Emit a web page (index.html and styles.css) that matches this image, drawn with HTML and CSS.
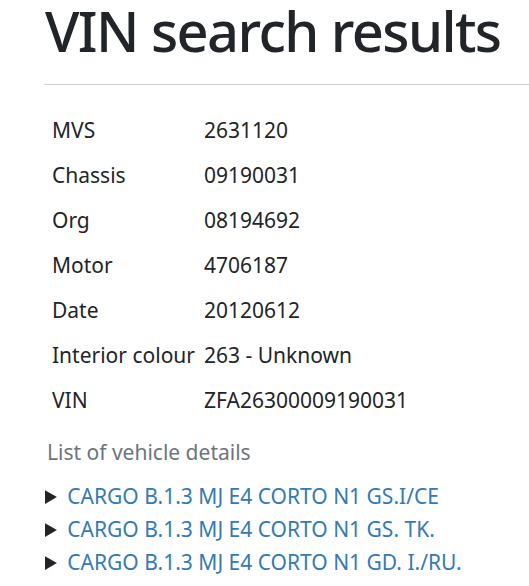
FILE: index.html
```html
<!DOCTYPE html>
<html lang="en">
<head>
    <meta charset="UTF-8">
    <meta name="viewport" content="width=device-width, initial-scale=1.0">
    <title>VIN search results</title>
    <link rel="stylesheet" href="styles.css">
</head>
<body>

    <div class="container">
        <h1>VIN search results</h1>
        <hr>

        <table class="vin-table">
            <caption>List of vehicle details</caption>
            <tbody>
                <tr><td class="key">MVS</td><td>2631120</td></tr>
                <tr><td class="key">Chassis</td><td>09190031</td></tr>
                <tr><td class="key">Org</td><td>08194692</td></tr>
                <tr><td class="key">Motor</td><td>4706187</td></tr>
                <tr><td class="key">Date</td><td>20120612</td></tr>
                <tr><td class="key">Interior colour</td><td>263 - Unknown</td></tr>
                <tr><td class="key">VIN</td><td>ZFA26300009190031</td></tr>
            </tbody>
        </table>

        <details class="vehicle">
            <summary><a href="#">CARGO B.1.3 MJ E4 CORTO N1 GS.I/CE</a></summary>
        </details>
        <details class="vehicle">
            <summary><a href="#">CARGO B.1.3 MJ E4 CORTO N1 GS. TK.</a></summary>
        </details>
        <details class="vehicle">
            <summary><a href="#">CARGO B.1.3 MJ E4 CORTO N1 GD. I./RU.</a></summary>
        </details>
    </div>

</body>
</html>
```

FILE: styles.css
```css
/* General Styling */
body {
    font-family: "Noto Sans", "Open Sans", sans-serif;
    font-size: 21px;
    line-height: 30px;
    color: #212529;
    background-color: #fff;
    margin: 0;
    padding: 0;
}

.container {
    padding: 0 0 0 45px;
}

h1 {
    font-size: 56px;
    font-weight: 500;
    line-height: 1.1;
    margin: 0;
    white-space: nowrap;
    letter-spacing: -1.6px;
}

hr {
    border: 0;
    border-top: 1px solid #d0d0d0;
    margin: 22px 0 23px -1px;
}

.vin-table {
    border-collapse: collapse;
    caption-side: bottom;
}

.vin-table td {
    padding: 7.5px 7px;
    vertical-align: top;
    white-space: nowrap;
}

.vin-table td.key {
    width: 144px;
    padding-right: 1px;
}

.vin-table caption {
    text-align: left;
    color: #6c757d;
    padding: 14.5px 0 0 2px;
}

.vehicle {
    margin-top: 3px;
}

.vehicle:first-of-type {
    margin-top: 14px;
}

.vehicle summary {
    color: #212529;
    cursor: pointer;
}

.vehicle a {
    color: #337ab7;
    text-decoration: none;
}
```
